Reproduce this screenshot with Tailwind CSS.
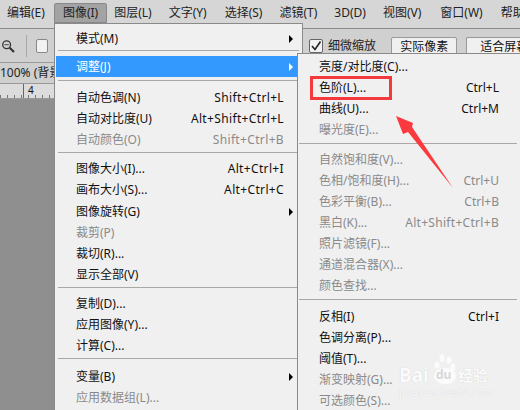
<!DOCTYPE html>
<html lang="zh">
<head>
<meta charset="UTF-8">
<title>图像 调整 菜单</title>
<script src="https://cdn.jsdelivr.net/npm/@tailwindcss/browser@4"></script>
</head>
<body class="w-[520px] h-[410px] overflow-hidden bg-[#8f8f8f] text-[12px] text-[#111] font-['Noto_Sans','Noto_Sans_CJK_SC',sans-serif]">
<div class="relative w-[520px] h-[410px] overflow-hidden">
  <!-- menu bar -->
  <div class="flex items-center h-[29px] pb-[2px] -ml-[2px] bg-[#d6d6d6] border-b border-[#8a8a8a] text-[#222] whitespace-nowrap">
    <span class="px-[9px]">编辑(E)</span>
    <span class="px-[8px] h-[20px] leading-[18px] bg-[#a3a3a3] border border-[#888] rounded-t-[2px]">图像(I)</span>
    <span class="pl-[7px] pr-[8px]">图层(L)</span>
    <span class="pl-[9px] pr-[10px]">文字(Y)</span>
    <span class="px-[8px]">选择(S)</span>
    <span class="px-[9px]">滤镜(T)</span>
    <span class="px-[8px]">3D(D)</span>
    <span class="pl-[9px] pr-[11px]">视图(V)</span>
    <span class="pl-[8px] pr-[9px]">窗口(W)</span>
    <span class="px-[9px]">帮助(H)</span>
  </div>
  <!-- options bar -->
  <div class="flex items-center h-[34px] pt-[1px] bg-[#d0d0d0] border-b border-[#9a9a9a] whitespace-nowrap">
    <svg class="ml-[1px]" width="16" height="16" viewBox="0 0 16 16" fill="none" stroke="#333"><circle cx="6.500" cy="6.500" r="4.500" stroke-width="1.500"/><path d="M4 6.500h5"/><path d="M10 10l5 5" stroke-width="2.500"/></svg>
    <span class="ml-[11px] h-[22px] w-px bg-[#a8a8a8]"></span>
    <span class="ml-[9px] w-[14px] h-[14px] rounded-[2px] border border-[#888] bg-[#f2f2f2]"></span>
    <span class="ml-[261px] w-[14px] h-[14px] rounded-[2px] border border-[#666] bg-[#f2f2f2] flex items-center justify-center">
      <svg width="12" height="12" viewBox="0 0 12 12" fill="none" stroke="#222" stroke-width="1.600"><path d="M2 6l3 3.500L10.500 1.500"/></svg>
    </span>
    <span class="ml-[5px] w-[48px] text-[#222]">细微缩放</span>
    <span class="ml-[15px] w-[76px] h-[19px] leading-[17px] text-center border border-[#999] bg-[#f0f0f0] rounded-[2px]">实际像素</span>
    <span class="ml-[9px] w-[60px] h-[19px] leading-[17px] pl-[13px] overflow-hidden border border-[#999] border-r-0 bg-[#f0f0f0] rounded-l-[2px]">适合屏幕</span>
  </div>
  <!-- document tab -->
  <div class="h-[20px] leading-[20px] bg-[#cfcfcf] whitespace-nowrap text-[#222]">100% (背景</div>
  <!-- ruler -->
  <div class="relative h-[16px] bg-[#dcdcdc] border-y border-[#9a9a9a]">
    <span class="absolute left-[23px] top-0 h-[14px] w-px bg-[#666]"></span>
    <span class="absolute left-[28px] top-0 text-[10px] leading-[12px]">4</span>
    <span class="absolute left-0 bottom-0 w-[55px] h-[3px] bg-[repeating-linear-gradient(90deg,#777_0,#777_1px,transparent_1px,transparent_7px)]"></span>
  </div>

  <!-- image menu -->
  <div class="absolute left-[54px] top-[23px] w-[249px] h-[400px] px-[1px] bg-[#f0f0f0] border border-[#8a8a8a]">
    <div class="flex items-center h-[21px] mt-[4px] pl-[20px] pr-[8px] justify-between"><span>模式(M)</span><span class="w-0 h-0 border-y-4 border-y-transparent border-l-4 border-l-black"></span></div>
    <div class="h-px bg-[#a8a8a8] mt-[1px] mb-[5px] mx-[2px]"></div>
    <div class="flex items-center h-[21px] pl-[20px] pr-[8px] justify-between bg-[#3399ff] text-white"><span>调整(J)</span><span class="w-0 h-0 border-y-4 border-y-transparent border-l-4 border-l-white"></span></div>
    <div class="h-px bg-[#a8a8a8] mt-[3px] mb-[6px] mx-[2px]"></div>
    <div class="flex items-center h-[21px] pl-[20px] pr-[17px] justify-between"><span>自动色调(N)</span><span class="tracking-[0.35px]">Shift+Ctrl+L</span></div>
    <div class="flex items-center h-[21px] pl-[20px] pr-[17px] justify-between"><span>自动对比度(U)</span><span class="tracking-[0.35px]">Alt+Shift+Ctrl+L</span></div>
    <div class="flex items-center h-[21px] pl-[20px] pr-[17px] justify-between text-[#8a8a8a]"><span>自动颜色(O)</span><span class="tracking-[0.35px]">Shift+Ctrl+B</span></div>
    <div class="h-px bg-[#a8a8a8] mt-[2px] mb-[5px] mx-[2px]"></div>
    <div class="flex items-center h-[21px] pl-[20px] pr-[17px] justify-between"><span>图像大小(I)...</span><span class="tracking-[0.35px]">Alt+Ctrl+I</span></div>
    <div class="flex items-center h-[21px] pl-[20px] pr-[17px] justify-between"><span>画布大小(S)...</span><span class="tracking-[0.35px]">Alt+Ctrl+C</span></div>
    <div class="flex items-center h-[21px] mt-[1px] pl-[20px] pr-[8px] justify-between"><span>图像旋转(G)</span><span class="w-0 h-0 border-y-4 border-y-transparent border-l-4 border-l-black"></span></div>
    <div class="flex items-center h-[21px] pl-[20px] text-[#8a8a8a]"><span>裁剪(P)</span></div>
    <div class="flex items-center h-[21px] pl-[20px]"><span>裁切(R)...</span></div>
    <div class="flex items-center h-[21px] pl-[20px]"><span>显示全部(V)</span></div>
    <div class="h-px bg-[#a8a8a8] mt-[2px] mb-[5px] mx-[2px]"></div>
    <div class="flex items-center h-[21px] pl-[20px]"><span>复制(D)...</span></div>
    <div class="flex items-center h-[21px] pl-[20px]"><span>应用图像(Y)...</span></div>
    <div class="flex items-center h-[21px] pl-[20px]"><span>计算(C)...</span></div>
    <div class="h-px bg-[#a8a8a8] mt-[2px] mb-[7px] mx-[2px]"></div>
    <div class="flex items-center h-[21px] pl-[20px] pr-[8px] justify-between"><span>变量(B)</span><span class="w-0 h-0 border-y-4 border-y-transparent border-l-4 border-l-black"></span></div>
    <div class="flex items-center h-[21px] pl-[20px] text-[#8a8a8a]"><span>应用数据组(L)...</span></div>
  </div>

  <!-- adjustments submenu -->
  <div class="absolute left-[297px] top-[53px] w-[240px] h-[370px] pl-[21px] pr-[37px] pt-[2px] bg-[#f0f0f0] border border-[#8a8a8a]">
    <div class="flex items-center h-[21px] justify-between"><span>亮度/对比度(C)...</span></div>
    <div class="flex items-center h-[21px] justify-between"><span>色阶(L)...</span><span>Ctrl+L</span></div>
    <div class="flex items-center h-[21px] justify-between"><span>曲线(U)...</span><span>Ctrl+M</span></div>
    <div class="flex items-center h-[21px] justify-between text-[#8a8a8a]"><span>曝光度(E)...</span></div>
    <div class="h-px bg-[#a8a8a8] mt-[3px] mb-[5px] -ml-[20px] -mr-[18px]"></div>
    <div class="flex items-center h-[21px] justify-between text-[#8a8a8a]"><span>自然饱和度(V)...</span></div>
    <div class="flex items-center h-[21px] justify-between text-[#8a8a8a]"><span>色相/饱和度(H)...</span><span>Ctrl+U</span></div>
    <div class="flex items-center h-[21px] justify-between text-[#8a8a8a]"><span>色彩平衡(B)...</span><span>Ctrl+B</span></div>
    <div class="flex items-center h-[21px] justify-between text-[#8a8a8a]"><span>黑白(K)...</span><span class="tracking-[0.3px]">Alt+Shift+Ctrl+B</span></div>
    <div class="flex items-center h-[21px] justify-between text-[#8a8a8a]"><span>照片滤镜(F)...</span></div>
    <div class="flex items-center h-[21px] justify-between text-[#8a8a8a]"><span>通道混合器(X)...</span></div>
    <div class="flex items-center h-[21px] justify-between text-[#8a8a8a]"><span>颜色查找...</span></div>
    <div class="h-px bg-[#a8a8a8] mt-[3px] mb-[6px] -ml-[20px] -mr-[18px]"></div>
    <div class="flex items-center h-[21px] justify-between"><span>反相(I)</span><span>Ctrl+I</span></div>
    <div class="flex items-center h-[21px] justify-between"><span>色调分离(P)...</span></div>
    <div class="flex items-center h-[21px] justify-between"><span>阈值(T)...</span></div>
    <div class="flex items-center h-[21px] justify-between text-[#8a8a8a]"><span>渐变映射(G)...</span></div>
    <div class="flex items-center h-[21px] justify-between text-[#8a8a8a]"><span>可选颜色(S)...</span></div>
  </div>

  <!-- annotation: box and arrow -->
  <div class="absolute left-[310px] top-[76px] w-[82px] h-[24px] border-[3px] border-[#f4383c]"></div>
  <svg class="absolute left-[390px] top-[110px]" width="70" height="90" viewBox="0 0 70 90"><path d="M6 6L23 13L22 17L63 78L18 22L13 24Z" fill="#fb3a3f"/></svg>

  <!-- watermark -->
  <svg class="absolute left-[432px] top-[352px]" width="26" height="34" viewBox="0 0 26 34" fill="#fbfbfb"><ellipse cx="5" cy="13" rx="2.500" ry="3.500"/><ellipse cx="10" cy="6" rx="2.500" ry="3.500"/><ellipse cx="17" cy="8" rx="2.500" ry="3.500"/><ellipse cx="21" cy="15" rx="2.500" ry="3.500"/><ellipse cx="13" cy="24" rx="11" ry="8"/></svg>
  <div class="absolute left-[399px] top-[366px] flex items-center h-[18px] leading-none whitespace-nowrap font-bold text-[#fbfbfb] [text-shadow:0_0_1px_#c8c8c8]">
    <span class="text-[19px] w-[37px]">Bai</span>
    <span class="text-[12px] w-[22px] text-[#d8d8d8] [text-shadow:none]">du</span>
    <span class="text-[15px]">经验</span>
  </div>
  <div class="absolute left-[399px] top-[387px] text-[10px] leading-[11px] tracking-[0.5px] whitespace-nowrap text-[#fbfbfb] [text-shadow:0_0_1px_#c8c8c8]">jingyan.baidu.com</div>
</div>
</body>
</html>
